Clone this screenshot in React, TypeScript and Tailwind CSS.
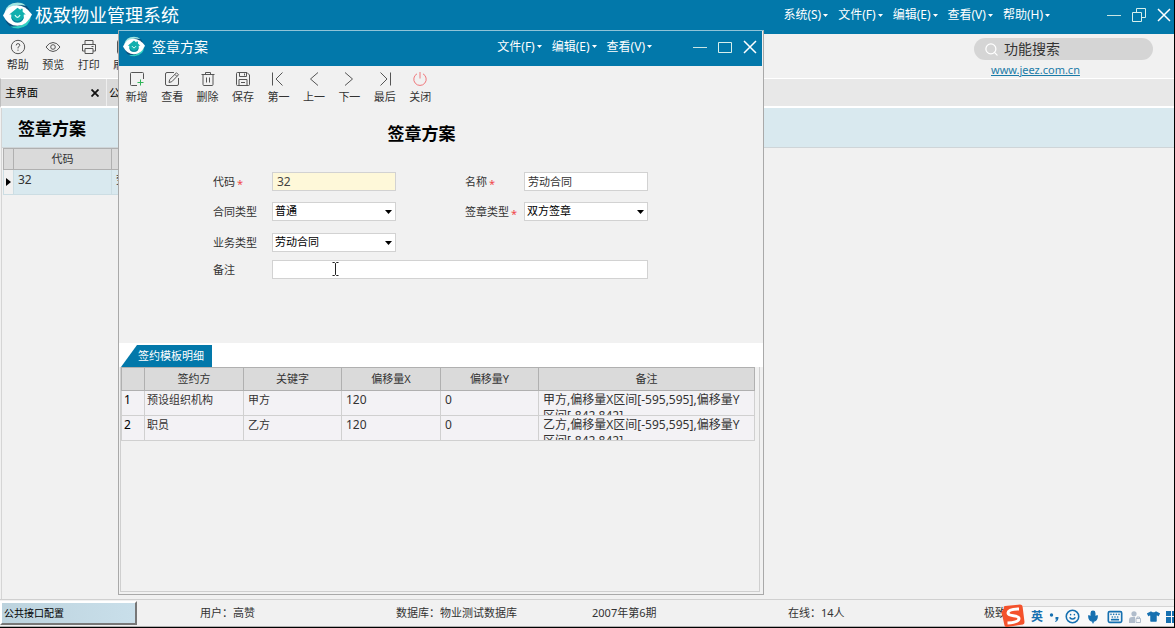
import React from 'react';
import { Mic, Keyboard, Smile, Search } from 'lucide-react';
import { FaTshirt } from 'react-icons/fa';

const Logo = ({ className }: { className: string }) => (
    <svg viewBox="0 0 28 26" className={className} aria-hidden="true">
        <circle cx="14" cy="13" r="12.500" fill="#0b4f7c" />
        <path d="M1.500 10 Q3.500 1 14 0.500 Q19 0.500 22 3.500 Q13 1.500 7 5.500 Q3.500 8 1.500 10Z" fill="#9fe6e2" />
        <path d="M27 14 Q26 24 15 25.500 Q10 25.800 7 23.500 Q15 24.500 21 20.500 Q25 17.500 27 14Z" fill="#2fd0c4" />
        <path d="M0 13 Q4 3 13 3 Q22 3 28 12 Q23 23 14 23 Q5 23 0 13Z" fill="#fff" />
        <path d="M14 5.500 L17 7.800 V6.500 H19 V9.300 L22 12 H20 Q21 19.500 14 19.800 Q7 19.500 8 12 H6Z" fill="#12b0ae" />
        <path d="M8 14 Q8.500 19.800 14 19.800 Q19.500 19.800 20 14 Q18 18.500 14 18.500 Q10 18.500 8 14Z" fill="#0a7f9c" />
        <path d="M11.500 12.500 Q14 17 16.500 12.500" fill="none" stroke="#e0fff8" strokeWidth="1.200" />
    </svg>
);

const iconPaths: Record<string, React.ReactNode> = {
    help: (
        <>
            <circle cx="8" cy="8" r="6.700" />
            <path d="M6.200 6.400 Q6.200 4.600 8 4.600 T9.800 6.300 Q9.800 7.300 8 8.300 V9.400 M8 10.600 V11.800" />
        </>
    ),
    preview: (
        <>
            <path d="M1 8 Q4 3.500 8 3.500 T15 8 Q12 12.500 8 12.500 T1 8Z" />
            <circle cx="8" cy="8" r="2.300" />
        </>
    ),
    print: (
        <>
            <path d="M4 5 V1.500 H12 V5 M4 12 H1.500 V5.500 H14.500 V12 H12 M4 9.500 H12 V14.500 H4Z M10.500 7.500 H12.500" />
        </>
    ),
    add: (
        <>
            <path d="M8 14.500 H2.500 Q1.500 14.500 1.500 13.500 V2.500 Q1.500 1.500 2.500 1.500 H13.500 Q14.500 1.500 14.500 2.500 V8" />
            <path d="M11.500 8.500 V14.500 M8.500 11.500 H14.500" stroke="#2fb457" />
        </>
    ),
    edit: (
        <>
            <path d="M10 1.500 H3 Q1.500 1.500 1.500 3 V13 Q1.500 14.500 3 14.500 H13 Q14.500 14.500 14.500 13 V7" />
            <path d="M5 11.500 L5.700 8.500 L12.500 1.800 L14.500 3.800 L7.800 10.700Z M11 3.500 L12.800 5.300" />
        </>
    ),
    remove: (
        <>
            <path d="M1.500 3.500 H14.500 M5.500 3.500 V1.500 H10.500 V3.500 M3 3.500 V13.500 Q3 14.500 4 14.500 H12 Q13 14.500 13 13.500 V3.500 M6.500 6.500 V11.500 M9.500 6.500 V11.500" />
        </>
    ),
    save: (
        <>
            <path d="M1.500 2.500 Q1.500 1.500 2.500 1.500 H12 L14.500 4 V13.500 Q14.500 14.500 13.500 14.500 H2.500 Q1.500 14.500 1.500 13.500Z M4.500 1.500 V5.500 H11.500 V1.500 M9.500 2.500 V4.500 M4 14.500 V8.500 H12 V14.500 M6 11.500 H10" />
        </>
    ),
    first: <path d="M2.500 1.500 V14.500 M12.500 1.500 L6 8 L12.500 14.500" />,
    prev: <path d="M12 1.500 L4.500 8 L12 14.500" />,
    next: <path d="M4 1.500 L11.500 8 L4 14.500" />,
    last: <path d="M3.500 1.500 L10 8 L3.500 14.500 M13.500 1.500 V14.500" />,
    close: <path d="M5 2.800 A6.200 6.200 0 1 0 11 2.800 M8 1 V7.500" stroke="#f0787c" />,
};

const ToolButton = ({ icon, label }: { icon: string; label: string }) => (
    <button className="flex flex-col items-center gap-0.5 text-[11px] leading-4 text-[#333]">
        <svg viewBox="0 0 16 16" className="h-4 w-4" fill="none" stroke="#555" strokeWidth="1">
            {iconPaths[icon]}
        </svg>
        {label}
    </button>
);

const MenuItem = ({ label }: { label: string }) => (
    <button className="flex items-center gap-0.5 whitespace-nowrap text-xs leading-4">
        {label}
        <svg viewBox="0 0 5 3" className="h-[3px] w-[5px]" fill="currentColor">
            <path d="M0 0 H5 L2.500 3Z" />
        </svg>
    </button>
);

const WindowButtons = ({ restore }: { restore?: boolean }) => (
    <div className="flex items-center gap-[11px]">
        <button aria-label="最小化">
            <svg viewBox="0 0 14 14" className="h-3.5 w-3.5" stroke="#c9e6e4">
                <path d="M0 7.500 H14" />
            </svg>
        </button>
        <button aria-label="最大化">
            <svg viewBox="0 0 14 14" className="h-3.5 w-3.5" stroke="#d8f0ec" fill="none">
                {restore ? <path d="M0.500 4.500 H9.500 V13.500 H0.500Z M4.500 4.500 V0.500 H13.500 V9.500 H9.500" /> : <path d="M0.500 2.500 H13.500 V12.500 H0.500Z" />}
            </svg>
        </button>
        <button aria-label="关闭">
            <svg viewBox="0 0 14 14" className="h-3.5 w-3.5" stroke="#fff" strokeWidth="1.500">
                <path d="M1 1 L13 13 M13 1 L1 13" />
            </svg>
        </button>
    </div>
);

const FieldLabel = ({ id, label, required }: { id: string; label: string; required?: boolean }) => (
    <label htmlFor={id} className="flex h-4 w-[59px] shrink-0 whitespace-nowrap text-[11px] leading-[18px] text-[#333]">
        {label}
        {required && <span className="ml-0.5 pt-0.5 text-[#f0484c]">*</span>}
    </label>
);

const SelectBox = ({ id, value }: { id: string; value: string }) => (
    <div className="relative w-[124px]">
        <select id={id} defaultValue={value} className="block h-[19px] w-full appearance-none border border-[#d2d2d2] bg-white pl-0.5 text-[11px] leading-4 text-black">
            <option>{value}</option>
        </select>
        <svg viewBox="0 0 7 4" className="pointer-events-none absolute right-1 top-2 h-1 w-[7px]">
            <path d="M0 0 H7 L3.500 4Z" />
        </svg>
    </div>
);

const rows = [
    { party: '预设组织机构', keyword: '甲方', x: 120, y: 0, remark: '甲方,偏移量X区间[-595,595],偏移量Y区间[-842,842]' },
    { party: '职员', keyword: '乙方', x: 120, y: 0, remark: '乙方,偏移量X区间[-595,595],偏移量Y区间[-842,842]' },
];

const DetailTable = () => (
    <table className="w-[634px] table-fixed border-collapse text-[11px] text-[#333]">
        <colgroup>
            <col className="w-[23px]" />
            <col className="w-[99px]" />
            <col className="w-[98px]" />
            <col className="w-[99px]" />
            <col className="w-[98px]" />
            <col />
        </colgroup>
        <thead>
            <tr className="h-[23px] bg-[#dadada]">
                {['', '签约方', '关键字', '偏移量X', '偏移量Y', '备注'].map((h) => (
                    <th key={h} className="border border-[#b0b0b0] p-0 font-normal leading-4">{h}</th>
                ))}
            </tr>
        </thead>
        <tbody>
            {rows.map((row, i) => (
                <tr key={row.party} className="h-[25px] bg-[#f3f2f5] align-top [&>td]:border [&>td]:border-[#d0d0d0] [&>td]:p-0 [&>td]:pt-px">
                    <td><div className="pl-0.5 text-xs leading-4 text-black">{i + 1}</div></td>
                    <td><div className="pl-0.5 leading-4">{row.party}</div></td>
                    <td><div className="pl-1 leading-4">{row.keyword}</div></td>
                    <td><div className="pl-1 text-xs leading-4">{row.x}</div></td>
                    <td><div className="pl-1 text-xs leading-4">{row.y}</div></td>
                    <td><div className="h-[23px] overflow-hidden pl-1 pr-2 text-xs leading-4">{row.remark}</div></td>
                </tr>
            ))}
        </tbody>
    </table>
);

const SchemeDialog = () => (
    <section role="dialog" aria-label="签章方案" className="absolute left-[118px] top-[30px] flex h-[565px] w-[646px] flex-col border border-[#a9a9a9] border-t-[#8fc4d8] bg-[#f1f1f1]">
        <header className="mr-px flex h-[35px] shrink-0 items-center bg-[#0278aa] pb-1 pl-1 pr-[5px] text-white">
            <Logo className="h-[21px] w-[22px]" />
            <h2 className="ml-[7px] text-sm leading-5">签章方案</h2>
            <div className="ml-auto mr-[41px] flex gap-2.5">
                <MenuItem label="文件(F)" />
                <MenuItem label="编辑(E)" />
                <MenuItem label="查看(V)" />
            </div>
            <WindowButtons />
        </header>
        <div className="grid w-[319px] grid-cols-9 pt-[5px]">
            <ToolButton icon="add" label="新增" />
            <ToolButton icon="edit" label="查看" />
            <ToolButton icon="remove" label="删除" />
            <ToolButton icon="save" label="保存" />
            <ToolButton icon="first" label="第一" />
            <ToolButton icon="prev" label="上一" />
            <ToolButton icon="next" label="下一" />
            <ToolButton icon="last" label="最后" />
            <ToolButton icon="close" label="关闭" />
        </div>
        <h1 className="mt-[17px] pr-[39px] text-center text-[17px] font-bold leading-6 text-black">签章方案</h1>
        <form className="mt-5 pl-[94px] text-xs">
            <div className="flex h-[30px] items-center">
                <FieldLabel id="code" label="代码" required />
                <input id="code" defaultValue="32" className="h-[19px] w-[124px] border border-[#d2d2d2] bg-[#fef8d9] px-1 text-xs leading-4 text-[#444]" />
                <div className="ml-[69px] flex items-center">
                    <FieldLabel id="name" label="名称" required />
                    <input id="name" defaultValue="劳动合同" className="h-[19px] w-[124px] border border-[#d2d2d2] bg-white px-[3px] text-[11px] leading-4 text-[#333]" />
                </div>
            </div>
            <div className="flex h-[30px] items-center">
                <FieldLabel id="contract" label="合同类型" />
                <SelectBox id="contract" value="普通" />
                <div className="ml-[69px] flex items-center">
                    <FieldLabel id="sign" label="签章类型" required />
                    <SelectBox id="sign" value="双方签章" />
                </div>
            </div>
            <div className="flex h-8 items-center">
                <FieldLabel id="business" label="业务类型" />
                <SelectBox id="business" value="劳动合同" />
            </div>
            <div className="relative flex h-[22px] items-center">
                <FieldLabel id="remark" label="备注" />
                <input id="remark" className="h-[19px] w-[376px] border border-[#d2d2d2] bg-white px-1 text-[11px] leading-4" />
                {/* text cursor */}
                <svg viewBox="0 0 7 14" className="absolute left-[119px] top-1 h-3.5 w-[7px]" fill="none" stroke="#222">
                    <path d="M0.500 0.500 H2.500 L3.500 1.500 L4.500 0.500 H6.500 M3.500 1.500 V12.500 M0.500 13.500 H2.500 L3.500 12.500 L4.500 13.500 H6.500" />
                </svg>
            </div>
        </form>
        <div role="tablist" className="mt-[63px] flex h-6 items-end bg-white pl-0.5">
            <button role="tab" aria-selected="true" className="h-[22px] bg-[#0278aa] pl-[17px] pr-2 text-[11px] leading-4 text-white [clip-path:polygon(16px_0,100%_0,100%_100%,0_100%)]">
                签约模板明细
            </button>
        </div>
        <div className="mb-0.5 ml-px mr-[3px] min-h-0 flex-1 border border-t-0 border-[#cfcfcf]">
            <DetailTable />
        </div>
    </section>
);

const InputMethodBar = () => (
    <div className="absolute bottom-px right-0 flex h-[22px] w-[173px] items-center text-[#1670b0]">
        <svg viewBox="0 0 24 24" className="absolute left-0 top-0 h-6 w-6">
            <path d="M3 4 Q2 2.500 4 2 L19 0.500 Q21 0.500 21.500 2 L23.500 18 Q23.500 20 22 20.500 L6 23 Q4 23 3.500 21.500 L0.500 8Z" fill="#f4522c" />
            <path d="M18 5 Q7 5 7 9 C7 13 18 10.500 18 14.500 Q18 18.500 6.500 19" fill="none" stroke="#fff" strokeWidth="3" />
        </svg>
        <div className="ml-[22px] mt-0.5 flex h-5 flex-1 items-center justify-between overflow-hidden border-t border-[#d5d5d5] bg-[#f9f9f9] pl-2">
            <span className="text-xs font-bold leading-4">英</span>
            <svg viewBox="0 0 10 10" className="h-2.5 w-2.5" fill="currentColor">
                <circle cx="2.500" cy="3" r="1.700" />
                <path d="M6.500 5 H9.500 Q9.500 9 6.500 10 L6 9 Q7.500 8.500 7.500 7.500 H6.500Z" />
            </svg>
            <Smile size={15} strokeWidth={2.5} />
            <Mic size={14} strokeWidth={2.5} fill="currentColor" />
            <Keyboard size={16} strokeWidth={2.5} />
            <svg viewBox="0 0 12 12" className="h-3 w-3" fill="#b0bccb">
                <circle cx="5" cy="2.800" r="2.600" />
                <path d="M0 12 V9 Q0 6 3 6 H6 V12Z" />
                <path d="M7 7.500 H11.500 V11.500 H7Z M8 7.500 V6 H10.500 V7.500" stroke="#b0bccb" fill="none" />
            </svg>
            <FaTshirt size={13} />
            <svg viewBox="0 0 10 12" className="h-3 w-2" fill="currentColor" preserveAspectRatio="xMinYMid slice">
                <path d="M0 0 H5 V5 H0Z M6 0 H10 V5 H6Z M0 6 H5 V12 H0Z M6 6 H10 V12 H6Z" />
            </svg>
        </div>
    </div>
);

export default function App() {
    return (
        <div className="relative flex h-screen min-h-[600px] flex-col overflow-hidden border-b border-r border-black bg-[#f1f1f1] font-['Noto_Sans','Noto_Sans_CJK_SC',sans-serif]">
            <header className="flex h-[34px] shrink-0 items-center bg-[#0278aa] pb-1 pl-[3px] pr-[3px] text-white">
                <Logo className="h-[27px] w-[29px]" />
                <h1 className="ml-[3px] text-lg leading-6">极致物业管理系统</h1>
                <nav className="ml-auto mr-[57px] flex gap-2.5">
                    <MenuItem label="系统(S)" />
                    <MenuItem label="文件(F)" />
                    <MenuItem label="编辑(E)" />
                    <MenuItem label="查看(V)" />
                    <MenuItem label="帮助(H)" />
                </nav>
                <WindowButtons restore />
            </header>

            <div className="flex h-11 shrink-0 justify-between">
                <div className="grid w-[142px] grid-cols-4 pt-[5px]">
                    <ToolButton icon="help" label="帮助" />
                    <ToolButton icon="preview" label="预览" />
                    <ToolButton icon="print" label="打印" />
                    <ToolButton icon="add" label="刷新" />
                </div>
                <div className="mr-[21px] w-[179px] pt-1">
                    <label className="flex h-[22px] items-center rounded-full bg-[#d5d5d5] pl-2.5">
                        <Search size={15} color="#fff" strokeWidth={2} />
                        <input aria-label="功能搜索" placeholder="功能搜索" className="ml-[5px] w-[130px] bg-transparent text-sm leading-5 outline-none placeholder:text-[#333]" />
                    </label>
                    <a href="http://www.jeez.com.cn" className="ml-[17px] block w-fit text-[11px] leading-5 text-[#1a7ba8] underline">www.jeez.com.cn</a>
                </div>
            </div>

            <div className="flex h-[30px] shrink-0 border-b-2 border-l border-t border-white border-l-[#bdbdbd] bg-[#e8e8e8] text-[11px] leading-4 text-black">
                <div className="flex w-[105px] items-center justify-between bg-[#d9d9d9] pl-1 pr-[7px]">
                    主界面
                    <button aria-label="关闭标签">
                        <svg viewBox="0 0 8 8" className="h-2 w-2" stroke="#111" strokeWidth="1.800">
                            <path d="M0.500 0.500 L7.500 7.500 M7.500 0.500 L0.500 7.500" />
                        </svg>
                    </button>
                </div>
                <div className="flex w-[120px] items-center border-l border-[#eee] bg-[#d9d9d9] pl-0.5">公</div>
            </div>

            <main className="ml-px flex-1 border-l border-[#d5d5d5]">
                <div className="flex h-10 items-center border-b border-[#cfd5d8] bg-[#d9e9ef] pl-4">
                    <h2 className="pt-0.5 text-[17px] font-bold leading-6 text-black">签章方案</h2>
                </div>
                <table className="ml-px w-[208px] table-fixed border-collapse text-[#333]">
                    <colgroup>
                        <col className="w-[10px]" />
                        <col className="w-[98px]" />
                        <col />
                    </colgroup>
                    <thead>
                        <tr className="h-[21px] bg-[#dadada] text-[11px] leading-4 [&>th]:border [&>th]:border-[#b0b0b0] [&>th]:p-0 [&>th]:font-normal">
                            <th />
                            <th>代码</th>
                            <th>名称</th>
                        </tr>
                    </thead>
                    <tbody>
                        <tr className="h-[25px] bg-[#d9e9ef] align-top leading-5 [&>td]:border [&>td]:border-[#ccdde3] [&>td]:p-0">
                            <td className="bg-[#f1f1f1]">
                                <svg viewBox="0 0 5 8" className="ml-0.5 mt-2 h-2 w-[5px]">
                                    <path d="M0 0 L5 4 L0 8Z" />
                                </svg>
                            </td>
                            <td><div className="pl-1 text-xs leading-5">32</div></td>
                            <td><div className="pl-1 text-[11px] leading-5">劳动合同</div></td>
                        </tr>
                    </tbody>
                </table>
            </main>

            <footer className="flex h-7 shrink-0 border-b border-t border-b-[#b0b0b0] border-t-[#d0d0d0] text-[11px] text-[#333]">
                <button className="my-px w-[137px] shrink-0 border-2 border-b-[#777] border-l-white border-r-[#777] border-t-white bg-gradient-to-r from-[#bcd3de] to-[#c9dfea] pl-0.5 text-left text-[10px] leading-4 text-black">公共接口配置</button>
                <div className="flex flex-1 items-center whitespace-nowrap pl-[63px] leading-4">
                    <span className="w-[196px]">用户：高赞</span>
                    <span className="w-[196px]">数据库：物业测试数据库</span>
                    <span className="w-[196px]">2007年第6期</span>
                    <span className="w-[196px]">在线：14人</span>
                    <span>极致</span>
                </div>
            </footer>

            <SchemeDialog />
            <InputMethodBar />
        </div>
    );
}
